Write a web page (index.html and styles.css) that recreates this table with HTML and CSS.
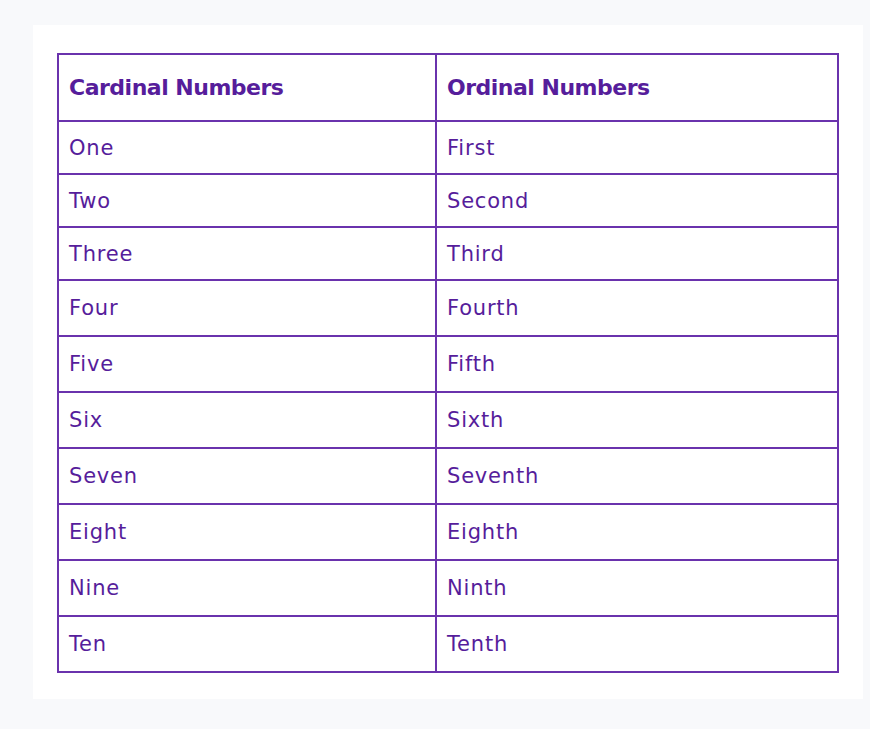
FILE: index.html
```html
<!DOCTYPE html>
<html>
<head>
<meta charset="utf-8">
<link rel="stylesheet" href="styles.css">
</head>
<body>
<div class="card">
  <table class="numbers">
    <thead>
      <tr class="head"><th>Cardinal Numbers</th><th>Ordinal Numbers</th></tr>
    </thead>
    <tbody>
      <tr class="r1"><td>One</td><td>First</td></tr>
      <tr class="r1"><td>Two</td><td>Second</td></tr>
      <tr class="r1"><td>Three</td><td>Third</td></tr>
      <tr class="r2"><td>Four</td><td>Fourth</td></tr>
      <tr class="r2"><td>Five</td><td>Fifth</td></tr>
      <tr class="r2"><td>Six</td><td>Sixth</td></tr>
      <tr class="r2"><td>Seven</td><td>Seventh</td></tr>
      <tr class="r2"><td>Eight</td><td>Eighth</td></tr>
      <tr class="r2"><td>Nine</td><td>Ninth</td></tr>
      <tr class="r2"><td>Ten</td><td>Tenth</td></tr>
    </tbody>
  </table>
</div>
</body>
</html>
```

FILE: styles.css
```css
html, body {
  margin: 0;
  padding: 0;
  background: #f8f9fb;
}
body {
  padding-top: 25px;
  padding-left: 33px;
  font-family: "DejaVu Sans", sans-serif;
  color: #561d9b;
}
.card {
  background: #ffffff;
  width: 830px;
  height: 674px;
  box-sizing: border-box;
  padding: 28px 0 0 24px;
}
.numbers {
  border-collapse: collapse;
  width: 782px;
  table-layout: fixed;
}
.numbers th, .numbers td {
  border: 2px solid #6a32ad;
  text-align: left;
  padding: 0 0 0 10px;
  vertical-align: middle;
}
.numbers th:first-child, .numbers td:first-child {
  width: 366px;
}
.numbers th {
  font-weight: 700;
  font-size: 22px;
  letter-spacing: -0.5px;
  height: 65px;
}
.numbers td {
  font-size: 21px;
  letter-spacing: 0.8px;
  font-weight: 400;
}
.r1 td { height: 51px; }
.r2 td { height: 54px; }
```
